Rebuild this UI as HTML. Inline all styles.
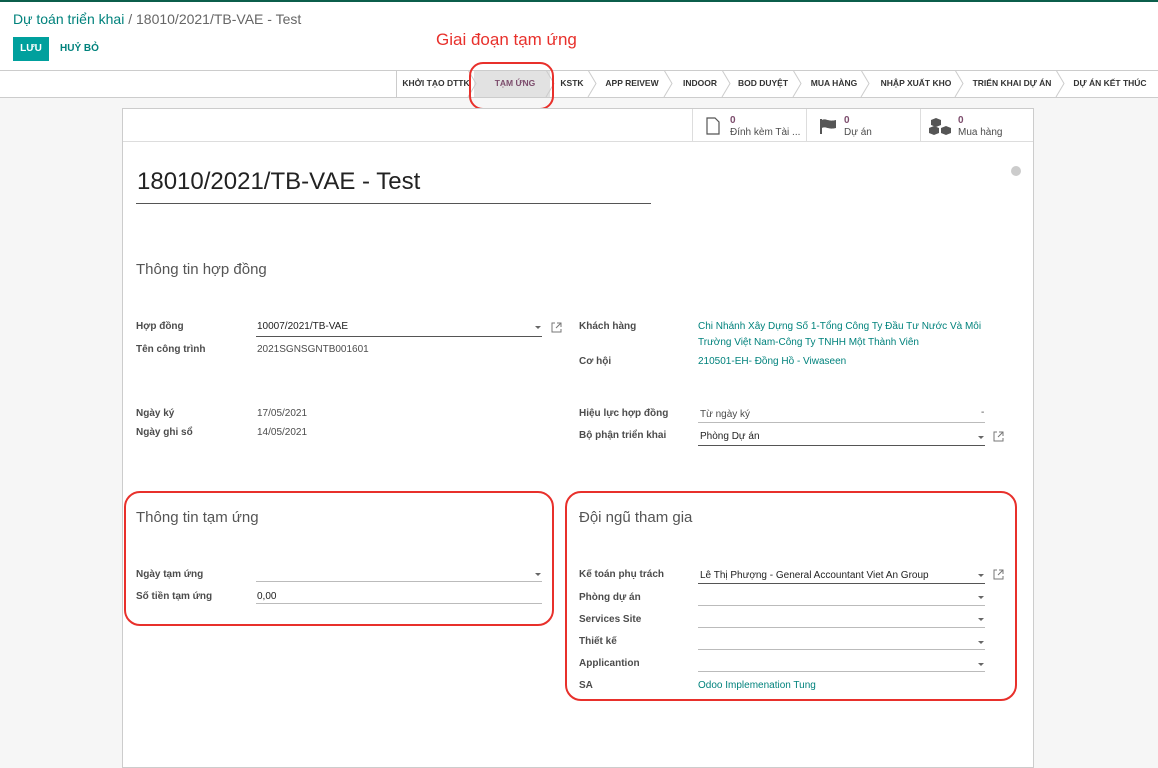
<!DOCTYPE html>
<html><head><meta charset="utf-8"><style>
*{box-sizing:border-box;margin:0;padding:0}
body{width:1158px;height:756px;overflow:hidden;background:#f6f6f6;font-family:"Liberation Sans",sans-serif;color:#4c4c4c;position:relative;font-size:11px}
.a{position:absolute;white-space:nowrap}
.lbl{font-weight:bold;color:#4c4c4c;font-size:10px}
.val{color:#4c4c4c;font-size:10px}
.lnk{color:#00827c;font-size:10px}
.inp{position:absolute;border-bottom:1px solid #555;height:16px}
.inp2{position:absolute;border-bottom:1px solid #bbb;height:16px}
.car{position:absolute;width:0;height:0;border-left:3px solid transparent;border-right:3px solid transparent;border-top:3px solid #666}
.red{position:absolute;border:2px solid #e8302b;border-radius:16px}
.st{position:absolute;top:70px;height:27px;line-height:26px;font-size:8.5px;font-weight:bold;color:#333;text-align:center}
</style></head><body>
<div class="a" style="left:0;top:0;width:1158px;height:97px;background:#fff"></div>
<div class="a" style="left:0;top:0;width:1158px;height:2px;background:#0b5e4b"></div>
<div class="a" style="left:13px;top:11px;font-size:14px;color:#00827c">Dự toán triển khai <span style="color:#666">/ 18010/2021/TB-VAE - Test</span></div>
<div class="a" style="left:13px;top:37px;width:36px;height:24px;background:#00a09d;color:#fff;font-size:10px;font-weight:bold;text-align:center;line-height:24px">LƯU</div>
<div class="a" style="left:60px;top:43px;font-size:10px;font-weight:bold;color:#00827c">HUỶ BỎ</div>
<div class="a" style="left:436px;top:30px;font-size:17px;color:#e8302b">Giai đoạn tạm ứng</div>
<div class="a" style="left:0;top:70px;width:1158px;height:1px;background:#ccc"></div>
<div class="a" style="left:0;top:97px;width:1158px;height:1px;background:#ccc"></div>
<div class="a" style="left:396px;top:70px;width:1px;height:27px;background:#ccc"></div>
<div class="a" style="left:474px;top:71px;width:76px;height:26px;background:#e2e2e2"></div>
<div class="st" style="left:400px;width:72px">KHỞI TẠO DTTK</div>
<div class="st" style="left:478px;width:74px;color:#7c4c6c">TẠM ỨNG</div>
<div class="st" style="left:552px;width:40px">KSTK</div>
<div class="st" style="left:596px;width:72px">APP REIVEW</div>
<div class="st" style="left:672px;width:56px">INDOOR</div>
<div class="st" style="left:730px;width:66px">BOD DUYỆT</div>
<div class="st" style="left:800px;width:68px">MUA HÀNG</div>
<div class="st" style="left:874px;width:84px">NHẬP XUẤT KHO</div>
<div class="st" style="left:962px;width:100px">TRIỂN KHAI DỰ ÁN</div>
<div class="st" style="left:1064px;width:92px">DỰ ÁN KẾT THÚC</div>
<svg class="a" style="left:0;top:70px" width="1158" height="27"><g fill="none" stroke="#ccc"><path d="M468 0l8 13.5-8 13.5M546 0l8 13.5-8 13.5M588 0l8 13.5-8 13.5M664 0l8 13.5-8 13.5M722 0l8 13.5-8 13.5M793 0l8 13.5-8 13.5M861 0l8 13.5-8 13.5M955 0l8 13.5-8 13.5M1056 0l8 13.5-8 13.5"/></g></svg>
<div class="red" style="left:469px;top:62px;width:85px;height:48px;border-radius:14px"></div>
<div class="a" style="left:122px;top:108px;width:912px;height:660px;background:#fff;border:1px solid #ccc"></div>
<div class="a" style="left:123px;top:141px;width:910px;height:1px;background:#ddd"></div>
<div class="a" style="left:692px;top:109px;width:1px;height:32px;background:#ddd"></div>
<div class="a" style="left:806px;top:109px;width:1px;height:32px;background:#ddd"></div>
<div class="a" style="left:920px;top:109px;width:1px;height:32px;background:#ddd"></div>
<svg class="a" style="left:706px;top:117px" width="14" height="18"><path d="M1 1h8l4 4v12H1z" fill="none" stroke="#555" stroke-width="1.2"/></svg>
<svg class="a" style="left:819px;top:118px" width="18" height="16"><path d="M2 1v15" stroke="#555" stroke-width="2"/><path d="M3 2c4-2 6 2 14 0v8c-8 2-10-2-14 0z" fill="#555"/></svg>
<svg class="a" style="left:929px;top:117px" width="24" height="18"><g fill="#555"><path d="M7 1l5 2v5l-5 2-5-2V3z"/><path d="M5 9l5 2v5l-5 2-5-2v-5z"/><path d="M17 9l5 2v5l-5 2-5-2v-5z"/></g></svg>
<div class="a" style="left:730px;top:115px;font-size:10px;font-weight:bold;color:#7c4c6c">0</div>
<div class="a" style="left:730px;top:127px;font-size:10px">Đính kèm Tài ...</div>
<div class="a" style="left:844px;top:115px;font-size:10px;font-weight:bold;color:#7c4c6c">0</div>
<div class="a" style="left:844px;top:127px;font-size:10px">Dự án</div>
<div class="a" style="left:958px;top:115px;font-size:10px;font-weight:bold;color:#7c4c6c">0</div>
<div class="a" style="left:958px;top:127px;font-size:10px">Mua hàng</div>
<div class="a" style="left:1011px;top:166px;width:10px;height:10px;border-radius:5px;background:#ccc"></div>
<div class="a" style="left:137px;top:168px;font-size:24px;color:#222">18010/2021/TB-VAE - Test</div>
<div class="a" style="left:136px;top:203px;width:515px;height:1px;background:#555"></div>
<div class="a" style="left:136px;top:261px;font-size:15px;color:#555">Thông tin hợp đồng</div>
<div class="a lbl" style="left:136px;top:321px">Hợp đồng</div>
<div class="a val" style="left:257px;top:321px;color:#222">10007/2021/TB-VAE</div>
<div class="inp" style="left:256px;top:321px;width:286px"></div><div class="car" style="left:535px;top:326px"></div>
<svg class="a" style="left:551px;top:322px" width="11" height="11"><path d="M4 1H1v9h9V7M6 1h4v4M10 1L5 6" fill="none" stroke="#777"/></svg>
<div class="a lbl" style="left:136px;top:344px">Tên công trình</div>
<div class="a val" style="left:257px;top:344px">2021SGNSGNTB001601</div>
<div class="a lbl" style="left:579px;top:321px">Khách hàng</div>
<div class="a lnk" style="left:698px;top:321px">Chi Nhánh Xây Dựng Số 1-Tổng Công Ty Đầu Tư Nước Và Môi</div>
<div class="a lnk" style="left:698px;top:337px">Trường Việt Nam-Công Ty TNHH Một Thành Viên</div>
<div class="a lbl" style="left:579px;top:356px">Cơ hội</div>
<div class="a lnk" style="left:698px;top:356px">210501-EH- Đồng Hồ - Viwaseen</div>
<div class="a lbl" style="left:136px;top:408px">Ngày ký</div>
<div class="a val" style="left:257px;top:408px">17/05/2021</div>
<div class="a lbl" style="left:136px;top:427px">Ngày ghi sổ</div>
<div class="a val" style="left:257px;top:427px">14/05/2021</div>
<div class="a lbl" style="left:579px;top:408px">Hiệu lực hợp đồng</div>
<div class="a val" style="left:700px;top:409px">Từ ngày ký</div>
<div class="a val" style="left:981px;top:407px">-</div>
<div class="inp2" style="left:698px;top:407px;width:287px"></div>
<div class="a lbl" style="left:579px;top:430px">Bộ phận triển khai</div>
<div class="a val" style="left:700px;top:431px;color:#222">Phòng Dự án</div>
<div class="inp" style="left:698px;top:430px;width:287px"></div><div class="car" style="left:978px;top:436px"></div>
<svg class="a" style="left:993px;top:431px" width="11" height="11"><path d="M4 1H1v9h9V7M6 1h4v4M10 1L5 6" fill="none" stroke="#777"/></svg>
<div class="red" style="left:124px;top:491px;width:430px;height:135px"></div>
<div class="a" style="left:136px;top:509px;font-size:15px;color:#555">Thông tin tạm ứng</div>
<div class="a lbl" style="left:136px;top:569px">Ngày tạm ứng</div>
<div class="inp2" style="left:256px;top:566px;width:286px"></div><div class="car" style="left:535px;top:573px"></div>
<div class="a lbl" style="left:136px;top:591px">Số tiền tạm ứng</div>
<div class="a val" style="left:257px;top:591px;color:#222">0,00</div>
<div class="inp2" style="left:256px;top:588px;width:286px"></div>
<div class="red" style="left:565px;top:491px;width:452px;height:210px"></div>
<div class="a" style="left:579px;top:509px;font-size:15px;color:#555">Đội ngũ tham gia</div>
<div class="a lbl" style="left:579px;top:569px">Kế toán phụ trách</div>
<div class="a val" style="left:700px;top:570px;color:#222">Lê Thị Phượng - General Accountant Viet An Group</div>
<div class="inp" style="left:698px;top:568px;width:287px"></div><div class="car" style="left:978px;top:574px"></div>
<svg class="a" style="left:993px;top:569px" width="11" height="11"><path d="M4 1H1v9h9V7M6 1h4v4M10 1L5 6" fill="none" stroke="#777"/></svg>
<div class="a lbl" style="left:579px;top:592px">Phòng dự án</div>
<div class="inp2" style="left:698px;top:590px;width:287px"></div><div class="car" style="left:978px;top:596px"></div>
<div class="a lbl" style="left:579px;top:614px">Services Site</div>
<div class="inp2" style="left:698px;top:612px;width:287px"></div><div class="car" style="left:978px;top:618px"></div>
<div class="a lbl" style="left:579px;top:636px">Thiết kế</div>
<div class="inp2" style="left:698px;top:634px;width:287px"></div><div class="car" style="left:978px;top:641px"></div>
<div class="a lbl" style="left:579px;top:658px">Applicantion</div>
<div class="inp2" style="left:698px;top:656px;width:287px"></div><div class="car" style="left:978px;top:663px"></div>
<div class="a lbl" style="left:579px;top:680px">SA</div>
<div class="a lnk" style="left:698px;top:680px">Odoo Implemenation Tung</div>
</body></html>
